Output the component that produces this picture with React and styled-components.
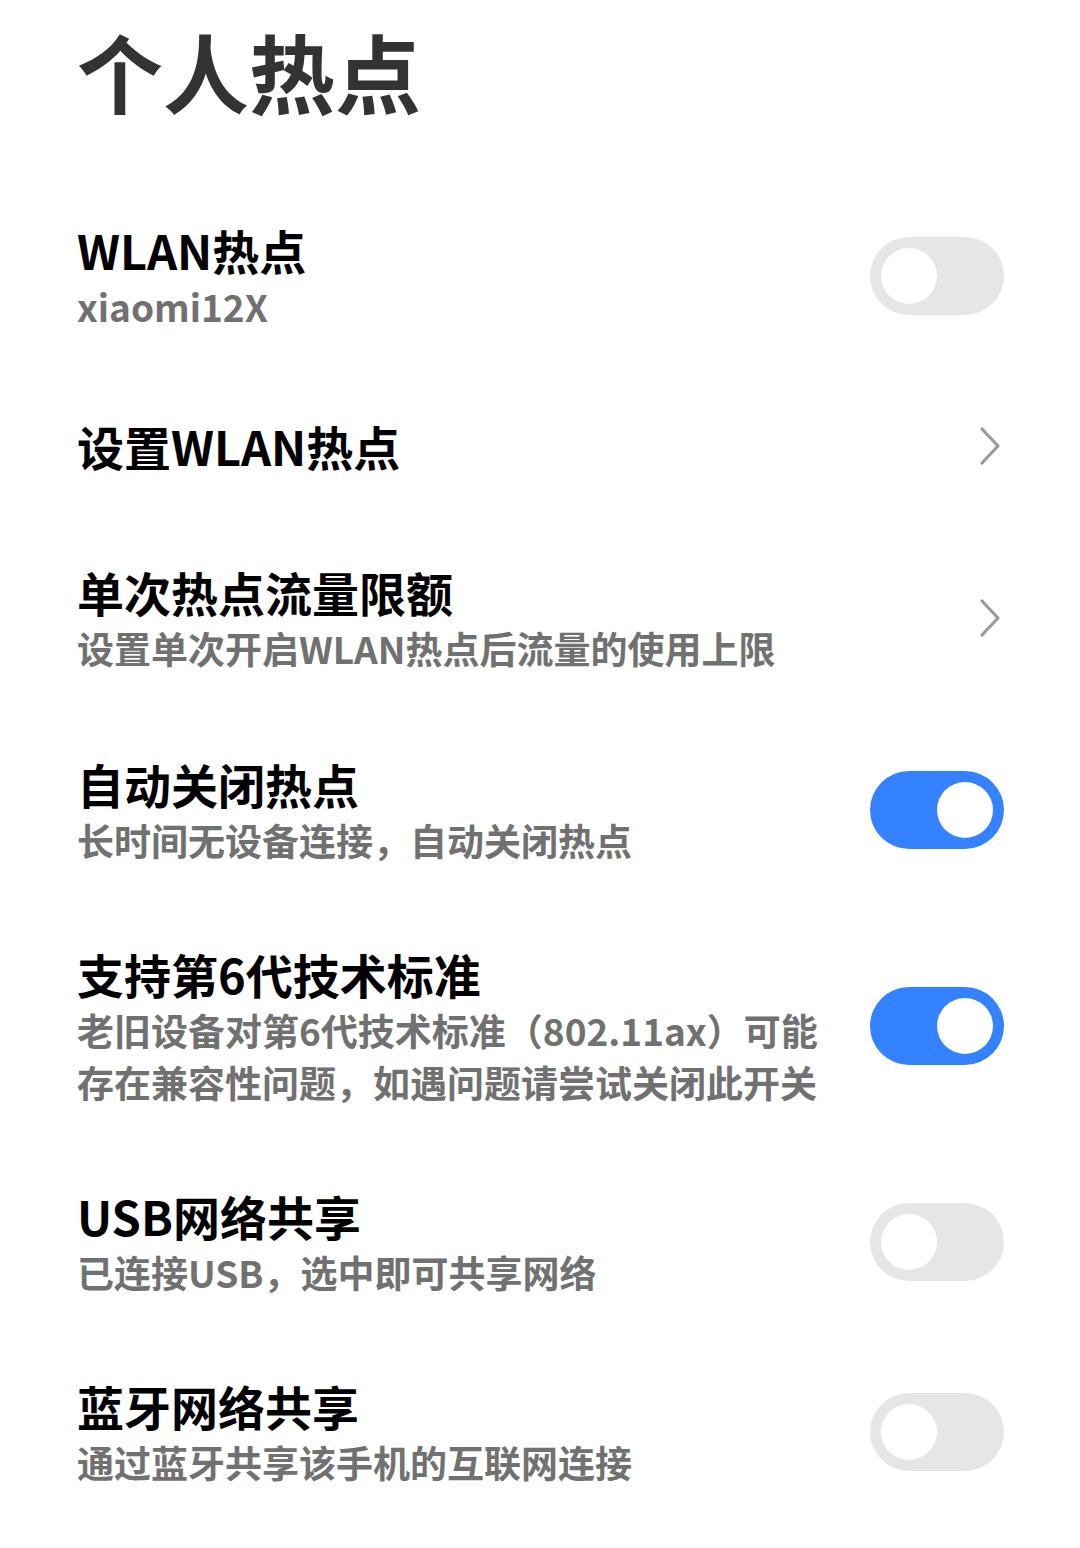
import React, { useState } from "react";
import styled, { createGlobalStyle } from "styled-components";

const GlobalStyle = createGlobalStyle`
  html, body {
    margin: 0;
    padding: 0;
    background: #ffffff;
  }
  body {
    font-family: "Noto Sans CJK SC", "Noto Sans", sans-serif;
    -webkit-font-smoothing: antialiased;
  }
`;

const items = [
  { id: "wlan", title: "WLAN热点", desc: ["xiaomi12X"], type: "toggle", on: false },
  { id: "setup", title: "设置WLAN热点", type: "link" },
  { id: "limit", title: "单次热点流量限额", desc: ["设置单次开启WLAN热点后流量的使用上限"], type: "link" },
  { id: "auto", title: "自动关闭热点", desc: ["长时间无设备连接，自动关闭热点"], type: "toggle", on: true },
  {
    id: "wifi6",
    title: "支持第6代技术标准",
    desc: ["老旧设备对第6代技术标准（802.11ax）可能", "存在兼容性问题，如遇问题请尝试关闭此开关"],
    type: "toggle",
    on: true,
  },
  { id: "usb", title: "USB网络共享", desc: ["已连接USB，选中即可共享网络"], type: "toggle", on: false },
  { id: "bt", title: "蓝牙网络共享", desc: ["通过蓝牙共享该手机的互联网连接"], type: "toggle", on: false },
];

const App = () => {
  const [state, setState] = useState(
    Object.fromEntries(items.filter((i) => i.type === "toggle").map((i) => [i.id, i.on]))
  );

  const flip = (id) => setState((prev) => ({ ...prev, [id]: !prev[id] }));

  return (
    <>
      <GlobalStyle />
      <Page>
        <Header>个人热点</Header>
        <List>
          {items.map((item) => (
            <Row key={item.id} $link={item.type === "link"}>
              <Texts>
                <Title>{item.title}</Title>
                {item.desc &&
                  item.desc.map((line) => <Desc key={line}>{line}</Desc>)}
              </Texts>
              {item.type === "toggle" ? (
                <Switch $on={state[item.id]} onClick={() => flip(item.id)}>
                  <Knob $on={state[item.id]} />
                </Switch>
              ) : (
                <Chevron width="22" height="40" viewBox="0 0 22 40">
                  <polyline
                    points="3,3 19,20 3,37"
                    fill="none"
                    stroke="#9a9a9a"
                    strokeWidth="3.2"
                    strokeLinecap="round"
                    strokeLinejoin="round"
                  />
                </Chevron>
              )}
            </Row>
          ))}
        </List>
      </Page>
    </>
  );
};

const Page = styled.div`
  width: 1080px;
  min-height: 1548px;
  box-sizing: border-box;
  padding: 19px 76px 0 77px;
`;

const Header = styled.h1`
  margin: 0 0 58px;
  font-size: 86px;
  line-height: 104px;
  font-weight: 700;
  color: #333333;
`;

const List = styled.div`
  display: flex;
  flex-direction: column;
`;

const Row = styled.div`
  display: flex;
  align-items: center;
  justify-content: space-between;
  gap: 30px;
  padding: ${({ $link }) => ($link ? "45px 0 41px" : "39px 0")};
  cursor: pointer;
`;

const Texts = styled.div`
  display: flex;
  flex-direction: column;
  min-width: 0;
`;

const Title = styled.div`
  font-size: 47px;
  line-height: 60px;
  font-weight: 700;
  color: #000000;
  white-space: nowrap;
`;

const Desc = styled.div`
  font-size: 37px;
  line-height: 52px;
  font-weight: 700;
  color: #717171;
  white-space: nowrap;
`;

const Switch = styled.div`
  flex: none;
  position: relative;
  width: 134px;
  height: 78px;
  border-radius: 39px;
  background: ${({ $on }) => ($on ? "#3482ff" : "#e6e6e6")};
  transition: background 0.2s;
`;

const Knob = styled.div`
  position: absolute;
  top: 11px;
  left: ${({ $on }) => ($on ? "67px" : "11px")};
  width: 56px;
  height: 56px;
  border-radius: 50%;
  background: #ffffff;
  transition: left 0.2s;
`;

const Chevron = styled.svg`
  flex: none;
  margin-right: 3px;
`;

export default App;
